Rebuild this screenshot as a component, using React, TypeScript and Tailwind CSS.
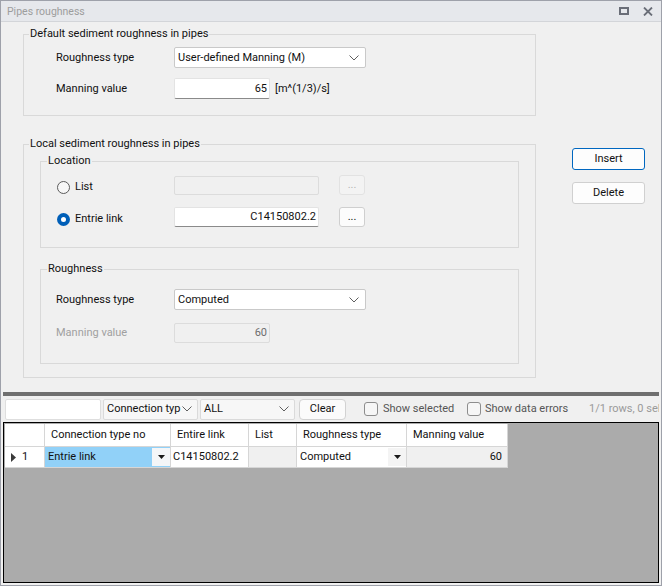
import React from 'react';

const Chevron = () => (
  <svg width="10" height="6" viewBox="0 0 10 6" className="shrink-0">
    <path d="M0.5 0.5 L5 5 L9.5 0.5" fill="none" stroke="#5f5f5f" strokeWidth="1" />
  </svg>
);

const SmallArrow = () => (
  <svg width="7" height="4" viewBox="0 0 7 4">
    <path d="M0 0 H7 L3.5 4 Z" fill="#1a1a1a" />
  </svg>
);

function Radio({ checked }: { checked: boolean }) {
  if (checked) {
    return (
      <span className="w-[13px] h-[13px] rounded-full bg-[#005fb8] flex items-center justify-center shrink-0">
        <span className="w-[5px] h-[5px] rounded-full bg-white" />
      </span>
    );
  }
  return <span className="w-[13px] h-[13px] rounded-full border border-[#5b5b5b] bg-[#f7f7f7] shrink-0" />;
}

function Checkbox() {
  return <span className="w-[14px] h-[14px] rounded-[3px] border border-[#8d8d8d] bg-[#f6f6f6] shrink-0" />;
}

export default function App() {
  return (
    <div className="w-[662px] h-[586px] border border-[#9ea1aa] bg-[#f0f0f0] flex flex-col overflow-hidden font-['Roboto',sans-serif] text-[11px] leading-[16px] text-[#111111]">
      {/* Title bar */}
      <div className="h-[21px] shrink-0 bg-[#e6e8ec] border-b border-[#d3d5d9] flex items-center pl-[6px] pr-[8px]">
        <span className="text-[#9d9d9d] text-[10.5px] mt-[1px]">Pipes roughness</span>
        <div className="ml-auto flex items-center gap-[14px]">
          <svg width="10" height="8" viewBox="0 0 10 8">
            <rect x="1" y="1" width="8" height="6" fill="none" stroke="#6a6e78" strokeWidth="2" />
          </svg>
          <svg width="10" height="9" viewBox="0 0 10 9">
            <path d="M1 0.5 L9 8.5 M9 0.5 L1 8.5" stroke="#6a6e78" strokeWidth="1.8" />
          </svg>
        </div>
      </div>

      {/* Top section */}
      <div className="h-[370px] shrink-0 flex">
        <div className="pl-[22px]">
          {/* Group 1 */}
          <fieldset className="mt-[4px] w-[513px] border border-[#d9d9d9]">
            <legend className="ml-[5px] px-[1px] leading-[16px]">Default sediment roughness in pipes</legend>
            <div className="pl-[32px] pt-[5px] pb-[16px] flex flex-col gap-[10px]">
              <div className="flex items-center">
                <span className="w-[118px]">Roughness type</span>
                <div className="w-[192px] h-[21px] bg-white border border-[#c9c9c9] rounded-[2px] flex items-center pl-[3px] pr-[6px]">
                  <span className="flex-1">User-defined Manning (M)</span>
                  <Chevron />
                </div>
              </div>
              <div className="flex items-center">
                <span className="w-[118px]">Manning value</span>
                <div className="w-[96px] h-[21px] bg-white border border-[#e3e3e3] border-b-[#8a8a8a] rounded-[2px] flex items-center justify-end pr-[2px]">
                  65
                </div>
                <span className="ml-[5px]">[m^(1/3)/s]</span>
              </div>
            </div>
          </fieldset>

          {/* Group 2 */}
          <fieldset className="mt-[20px] w-[513px] border border-[#d9d9d9]">
            <legend className="ml-[5px] px-[1px] leading-[16px]">Local sediment roughness in pipes</legend>
            <div className="px-[16px] pt-[1px] pb-[13px]">
              {/* Location */}
              <fieldset className="w-[479px] border border-[#d9d9d9]">
                <legend className="ml-[6px] px-[1px] leading-[16px]">Location</legend>
                <div className="pl-[16px] pt-[6px] pb-[20px] flex flex-col gap-[12px]">
                  <div className="flex items-center h-[20px]">
                    <div className="w-[117px] mt-[4px] flex items-center gap-[5px]">
                      <Radio checked={false} />
                      <span>List</span>
                    </div>
                    <div className="w-[145px] h-[19px] bg-[#f0f0f0] border border-[#dcdcdc] rounded-[2px]" />
                    <div className="ml-[20px] w-[26px] h-[20px] border border-[#e2e2e2] bg-[#f3f3f3] rounded-[3px] flex items-center justify-center text-[#b3b3b3]">
                      ...
                    </div>
                  </div>
                  <div className="flex items-center h-[20px]">
                    <div className="w-[117px] mt-[4px] flex items-center gap-[5px]">
                      <Radio checked={true} />
                      <span>Entrie link</span>
                    </div>
                    <div className="w-[145px] h-[20px] bg-white border border-[#e3e3e3] border-b-[#8a8a8a] rounded-[2px] flex items-center justify-end pr-[2px]">
                      C14150802.2
                    </div>
                    <div className="ml-[20px] w-[26px] h-[20px] border border-[#cfcfcf] bg-[#fcfcfc] rounded-[3px] flex items-center justify-center">
                      ...
                    </div>
                  </div>
                </div>
              </fieldset>

              {/* Roughness */}
              <fieldset className="mt-[13px] w-[479px] border border-[#d9d9d9]">
                <legend className="ml-[6px] px-[1px] leading-[16px]">Roughness</legend>
                <div className="pl-[15px] pt-[12px] pb-[20px] flex flex-col gap-[13px]">
                  <div className="flex items-center">
                    <span className="w-[118px]">Roughness type</span>
                    <div className="w-[192px] h-[21px] bg-white border border-[#c9c9c9] rounded-[2px] flex items-center pl-[3px] pr-[6px]">
                      <span className="flex-1">Computed</span>
                      <Chevron />
                    </div>
                  </div>
                  <div className="flex items-center">
                    <span className="w-[118px] text-[#a0a0a0]">Manning value</span>
                    <div className="w-[96px] h-[20px] bg-[#f0f0f0] border border-[#dcdcdc] rounded-[2px] flex items-center justify-end pr-[2px] text-[#6d6d6d]">
                      60
                    </div>
                  </div>
                </div>
              </fieldset>
            </div>
          </fieldset>
        </div>

        {/* Right buttons */}
        <div className="ml-[36px] pt-[126px] flex flex-col gap-[12px]">
          <div className="w-[73px] h-[22px] bg-[#fdfdfd] border border-[#0067c0] rounded-[3px] flex items-center justify-center">
            Insert
          </div>
          <div className="w-[73px] h-[22px] bg-[#fdfdfd] border border-[#d0d0d0] rounded-[3px] flex items-center justify-center">
            Delete
          </div>
        </div>
      </div>

      {/* Bottom panel */}
      <div className="flex-1 flex flex-col px-[2px] pb-[2px] min-h-0">
        <div className="h-[4px] shrink-0 bg-[#6f6f6f]" />
        {/* Toolbar */}
        <div className="h-[26px] shrink-0 flex items-center pl-[2px] whitespace-nowrap overflow-hidden">
          <div className="w-[96px] h-[21px] bg-white border border-[#dedede] rounded-[2px] shrink-0" />
          <div className="ml-[2px] w-[95px] h-[21px] bg-[#f7f7f7] border border-[#dadada] rounded-[2px] flex items-center pl-[3px] pr-[5px] shrink-0">
            <span className="flex-1">Connection typ</span>
            <Chevron />
          </div>
          <div className="ml-[2px] w-[95px] h-[21px] bg-[#f7f7f7] border border-[#dadada] rounded-[2px] flex items-center pl-[3px] pr-[5px] shrink-0">
            <span className="flex-1">ALL</span>
            <Chevron />
          </div>
          <div className="ml-[4px] w-[47px] h-[21px] bg-[#fbfbfb] border border-[#d2d2d2] rounded-[4px] flex items-center justify-center shrink-0">
            Clear
          </div>
          <div className="ml-[18px] flex items-center gap-[5px] shrink-0">
            <Checkbox />
            <span className="w-[84px] text-[#555555]">Show selected</span>
          </div>
          <div className="flex items-center gap-[4px] shrink-0">
            <Checkbox />
            <span className="w-[104px] text-[#555555]">Show data errors</span>
          </div>
          <span className="text-[#9a9a9a]">1/1 rows, 0 sel</span>
        </div>
        {/* Grid */}
        <div className="flex-1 border border-black bg-[#ababab] p-[1px] flex flex-col items-start">
          <div className="flex flex-col gap-px bg-[#d6d6d6] pr-px pb-px">
            <div className="flex gap-px h-[22px]">
              <div className="w-[39px] bg-white" />
              <div className="w-[125px] bg-white flex items-center pl-[6px]">Connection type no</div>
              <div className="w-[77px] bg-white flex items-center pl-[6px]">Entire link</div>
              <div className="w-[47px] bg-white flex items-center pl-[6px]">List</div>
              <div className="w-[109px] bg-white flex items-center pl-[6px]">Roughness type</div>
              <div className="w-[100px] bg-white flex items-center pl-[6px]">Manning value</div>
            </div>
            <div className="flex gap-px h-[20px]">
              <div className="w-[39px] bg-white flex items-center pl-[6px] gap-[6px]">
                <svg width="5" height="9" viewBox="0 0 5 9">
                  <path d="M0 0 L5 4.5 L0 9 Z" fill="#3a3a3a" />
                </svg>
                <span>1</span>
              </div>
              <div className="w-[125px] bg-[#91d1f8] flex items-center pl-[3px]">
                <span className="flex-1">Entrie link</span>
                <div className="w-[18px] h-[18px] bg-[#f4f6f8] flex items-center justify-center">
                  <SmallArrow />
                </div>
              </div>
              <div className="w-[77px] bg-white flex items-center pl-[2px]">C14150802.2</div>
              <div className="w-[47px] bg-[#f0f0f0]" />
              <div className="w-[109px] bg-white flex items-center pl-[3px]">
                <span className="flex-1">Computed</span>
                <div className="w-[18px] h-[18px] bg-[#f4f4f4] flex items-center justify-center">
                  <SmallArrow />
                </div>
              </div>
              <div className="w-[100px] bg-[#f0f0f0] flex items-center justify-end pr-[5px]">60</div>
            </div>
          </div>
        </div>
      </div>
    </div>
  );
}
